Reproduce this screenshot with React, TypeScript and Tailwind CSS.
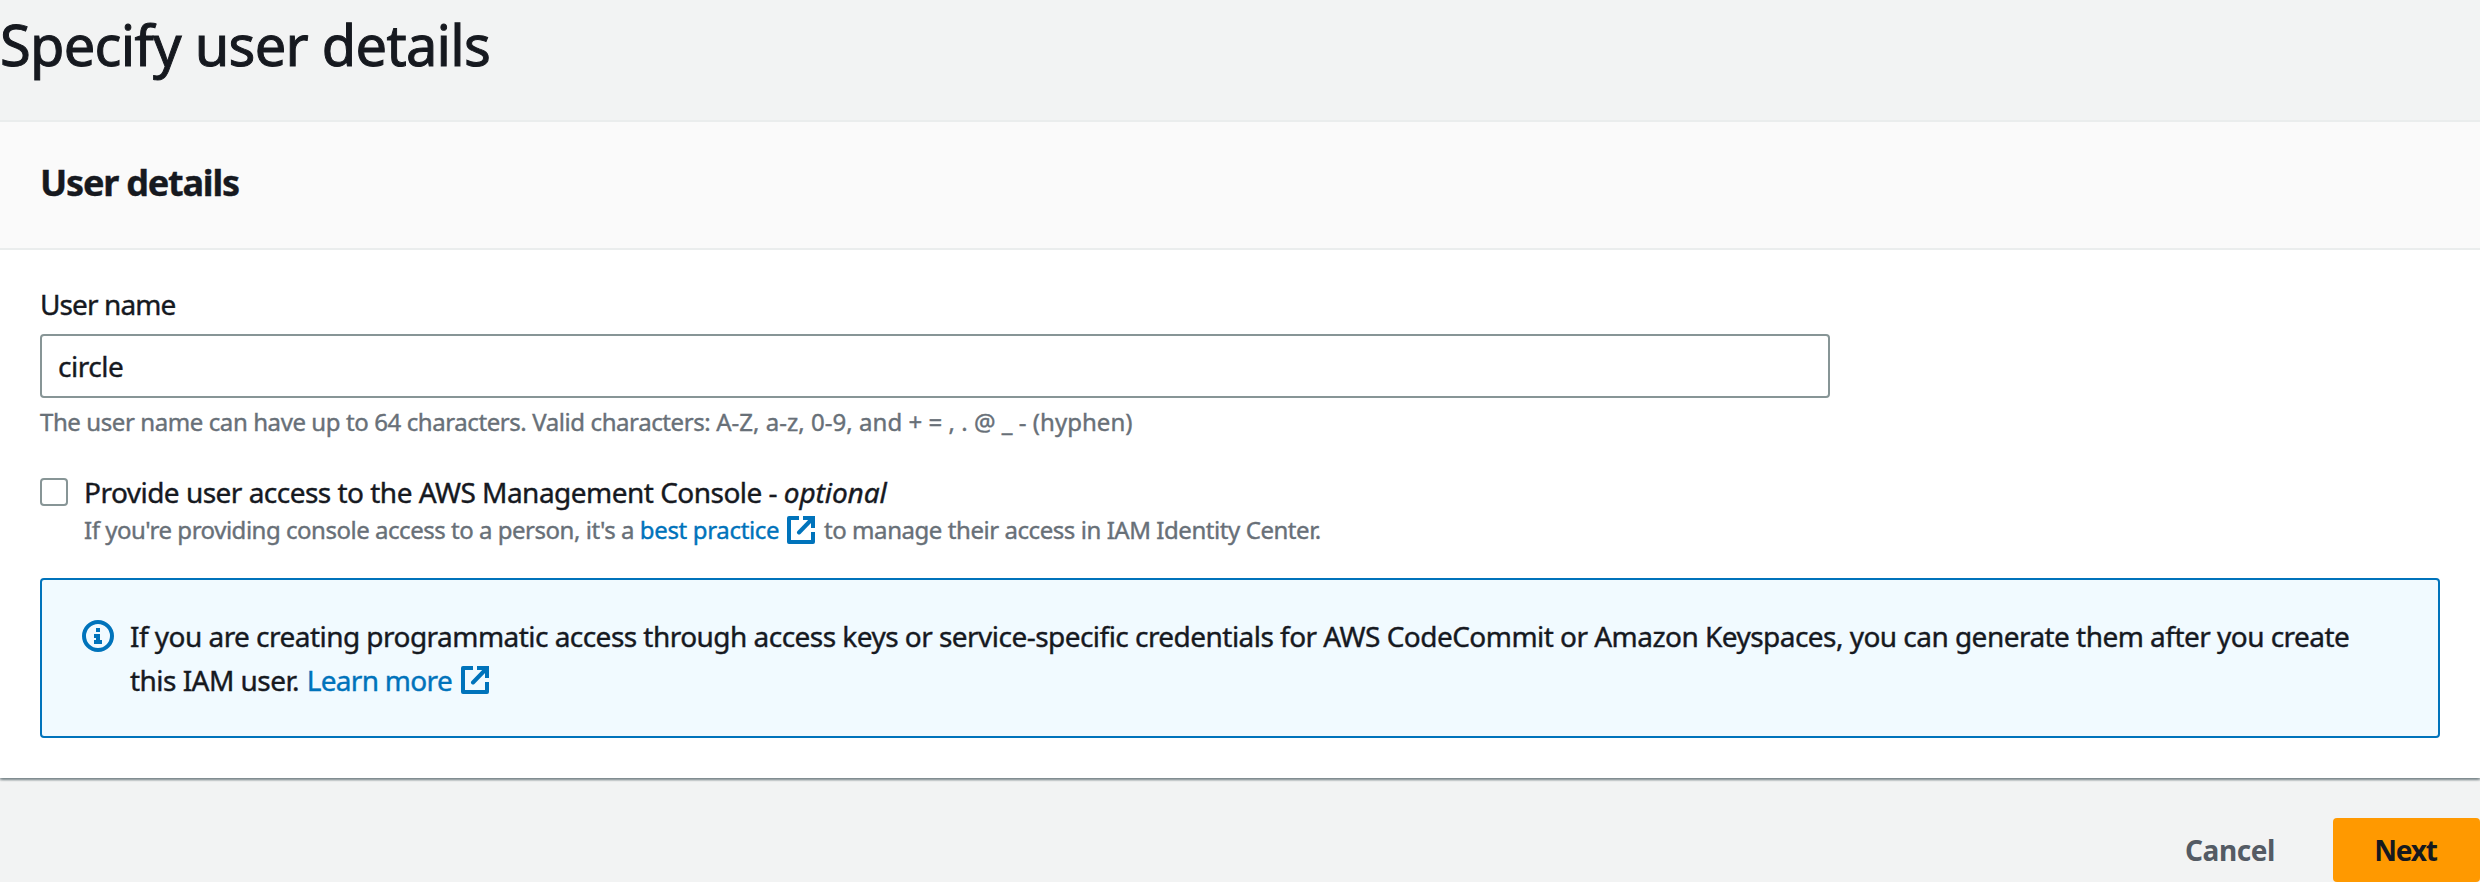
type IconProps = { className?: string };

function ExternalIcon({ className = "" }: IconProps) {
  return (
    <svg
      className={`inline-block h-7 w-7 ${className}`}
      viewBox="0 0 28 28"
      fill="none"
      stroke="#0073bb"
      strokeWidth="4"
      strokeLinejoin="round"
      aria-hidden="true"
    >
      <path d="M12 2H2v24h24V16" />
      <path d="M16 2h10v10" strokeLinejoin="miter" />
      <path d="M26 2 12 16.5" strokeLinecap="round" />
    </svg>
  );
}

function InfoIcon() {
  return (
    <svg className="mt-1.5 h-8 w-8 shrink-0" viewBox="0 0 32 32" aria-hidden="true">
      <circle cx="16" cy="16" r="14" fill="none" stroke="#0073bb" strokeWidth="4" />
      <path d="M14 8h4v4h-4zM12 14h6v6h2v4h-8v-4h2v-2h-2z" fill="#0073bb" />
    </svg>
  );
}

function PanelHeader() {
  return (
    <header className="border-y-2 border-[#eaeded] bg-[#fafafa] px-10 pt-[39px] pb-[43px]">
      <h2 className="text-[36px] leading-11 font-bold tracking-[-1.2px]">User details</h2>
    </header>
  );
}

function UserNameField() {
  return (
    <div className="flex flex-col">
      <label htmlFor="user-name" className="text-[28px] leading-11 tracking-[-0.9px]">
        User name
      </label>
      <input
        id="user-name"
        defaultValue="circle"
        className="mt-2 h-16 w-[1790px] rounded-[4px] border-2 border-[#879596] bg-white px-4 text-[28px] tracking-[-0.47px] outline-none"
      />
      <p className="mt-2 text-[24px] leading-8 tracking-[0.03px] text-[#687078]">
        <span className="tracking-[-0.41px]">The user name can have up to 64 characters. Valid characters: </span>
        A-Z, a-z, 0-9, and + = , . @ _ - (hyphen)
      </p>
    </div>
  );
}

function ConsoleAccess() {
  return (
    <div className="mt-8 flex">
      <button
        type="button"
        role="checkbox"
        aria-checked="false"
        aria-labelledby="console-access"
        className="mt-2 mr-4 h-7 w-7 shrink-0 rounded-[4px] border-2 border-[#879596] bg-white"
      />
      <div>
        <p id="console-access" className="text-[28px] leading-11 tracking-[-0.52px]">
          Provide user access to the AWS Management Console - <i className="tracking-[-0.1px]">optional</i>
        </p>
        <p className="flex h-8 items-center text-[24px] leading-8 tracking-[-0.475px] whitespace-pre text-[#687078]">
          <span>{"If you're providing console access to a person, it's a "}</span>
          <a className="flex items-center tracking-[-0.34px] text-[#0073bb]">
            best practice
            <ExternalIcon className="ml-2" />
          </a>
          <span className="ml-[3px] tracking-[-0.44px]">{" to manage their access in IAM Identity Center."}</span>
        </p>
      </div>
    </div>
  );
}

function InfoAlert() {
  return (
    <div className="mt-8 flex gap-4 rounded-[4px] border-2 border-[#0073bb] bg-[#f1faff] py-[34px] pl-10">
      <InfoIcon />
      <div className="text-[28px] leading-11 tracking-[-0.535px] whitespace-pre">
        <p>
          If you are creating programmatic access through access keys or service-specific credentials for AWS CodeCommit or Amazon Keyspaces, you can generate them after you create
        </p>
        <p className="flex h-11 items-center">
          <span>{"this IAM user. "}</span>
          <a className="ml-px flex items-center tracking-[-0.7px] text-[#0073bb]">
            Learn more
            <ExternalIcon className="ml-[9px]" />
          </a>
        </p>
      </div>
    </div>
  );
}

export default function App() {
  return (
    <main className="h-[882px] w-[2480px] overflow-hidden bg-[#f2f3f3] font-['Noto_Sans',sans-serif] text-[#16191f] [-webkit-text-stroke-width:0.4px]">
      <h1 className="h-[120px] pt-2 text-[56px] leading-[72px] tracking-[-0.72px] [-webkit-text-stroke-width:1px]">
        Specify user details
      </h1>
      <section className="bg-white shadow-[0_2px_2px_0_rgba(0,28,36,0.3),2px_2px_2px_0_rgba(0,28,36,0.15),-2px_2px_2px_0_rgba(0,28,36,0.15)]">
        <PanelHeader />
        <div className="px-10 pt-8 pb-10">
          <UserNameField />
          <ConsoleAccess />
          <InfoAlert />
        </div>
      </section>
      <footer className="mt-10 flex justify-end text-[28px] leading-16 font-bold [-webkit-text-stroke-width:0px]">
        <button type="button" className="pr-[58px] tracking-[-0.42px] text-[#545b64]">
          Cancel
        </button>
        <button type="button" className="w-[147px] rounded-[4px] bg-[#ff9900] pr-[2px] tracking-[-1.2px]">
          Next
        </button>
      </footer>
    </main>
  );
}
